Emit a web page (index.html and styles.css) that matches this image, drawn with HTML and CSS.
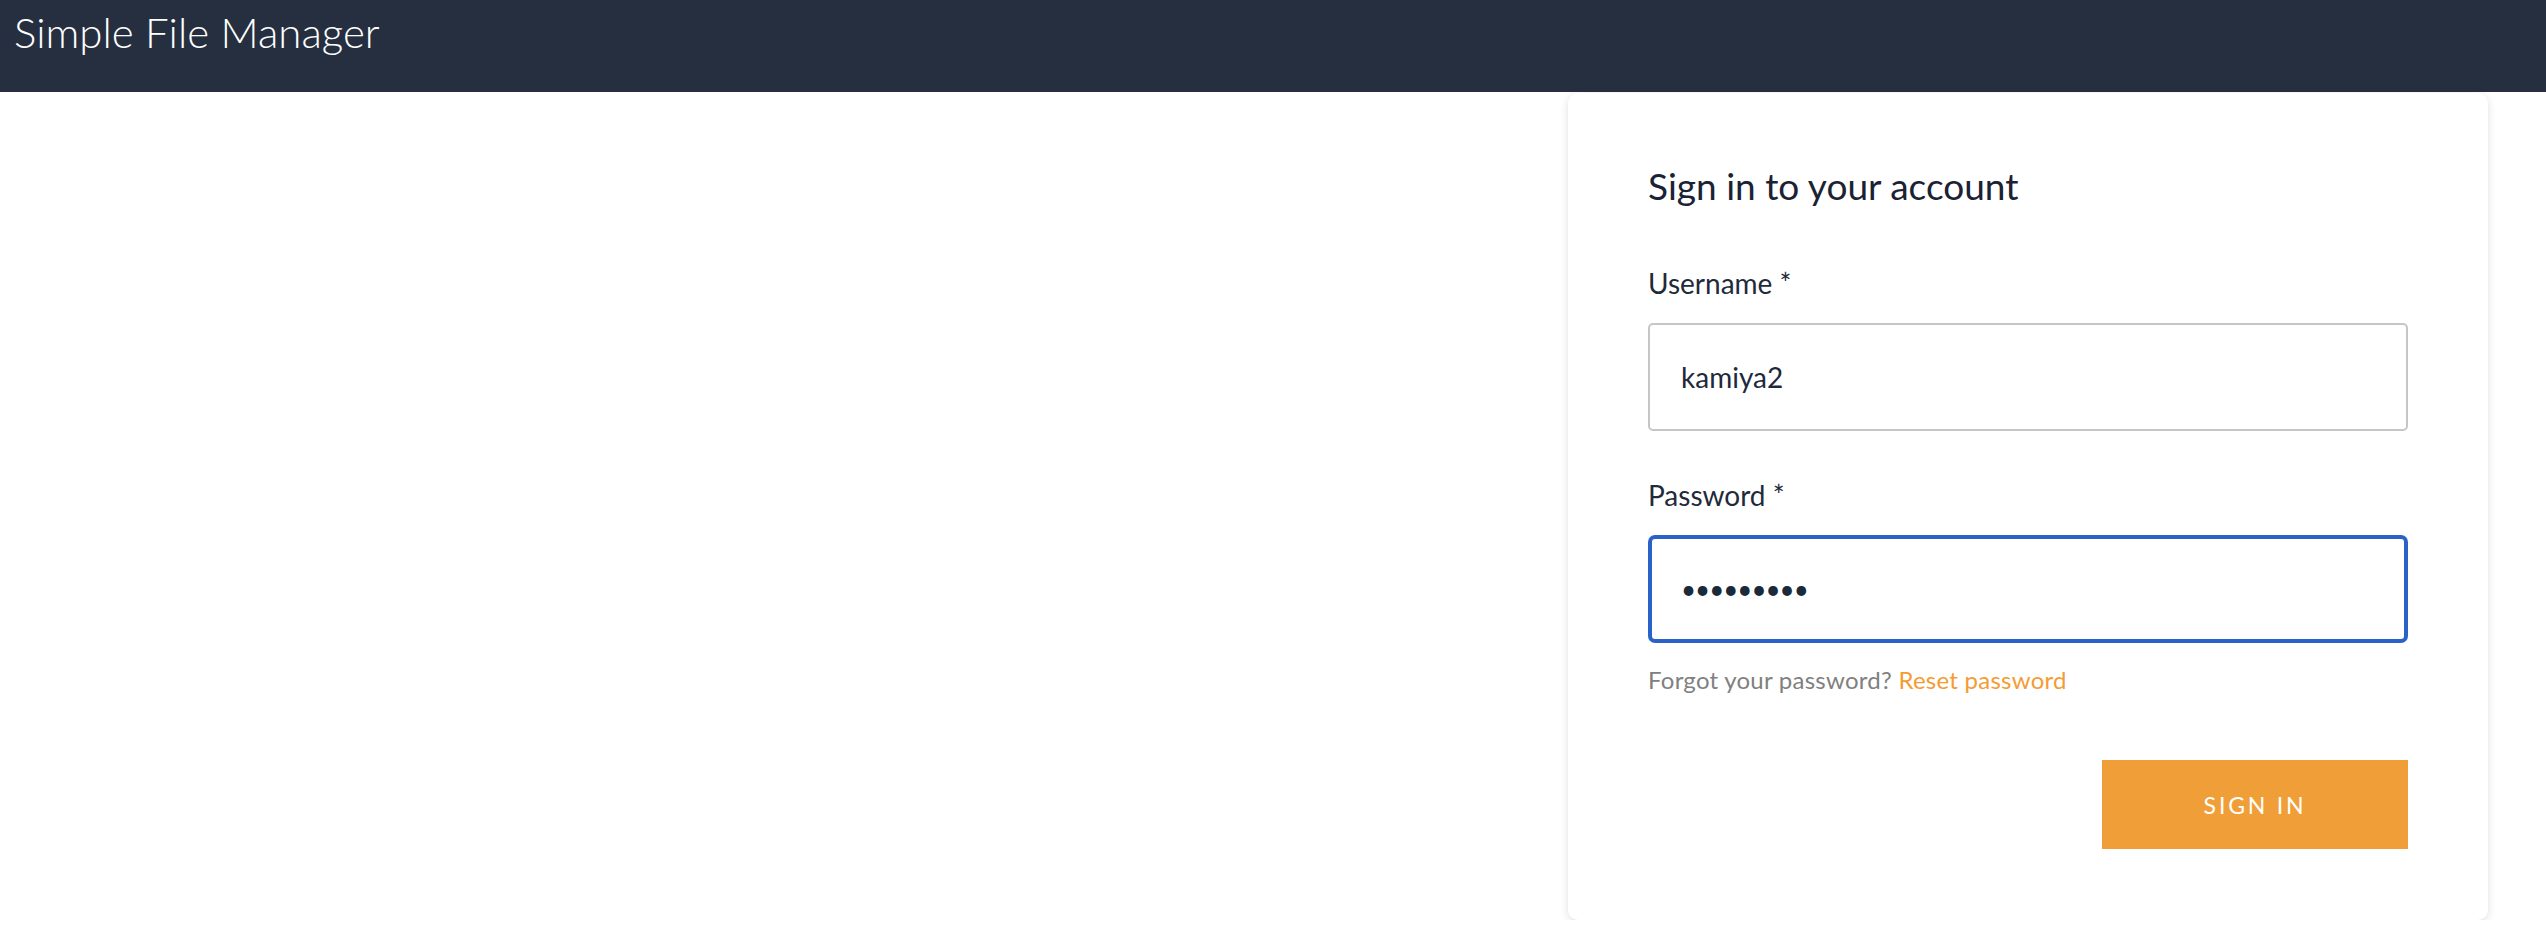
FILE: index.html
```html
<!DOCTYPE html>
<html lang="en">
<head>
<meta charset="utf-8">
<title>Simple File Manager</title>
<link rel="stylesheet" href="styles.css">
</head>
<body>
<header class="topbar">
  <div class="brand">Simple File Manager</div>
</header>
<main class="page">
  <section class="card">
    <h1 class="card-title">Sign in to your account</h1>
    <form class="form">
      <label class="label" for="user">Username *</label>
      <div class="input">kamiya2</div>
      <label class="label label-pw" for="pw">Password *</label>
      <div class="input input-focus"><span class="dots">•••••••••</span></div>
      <p class="forgot">Forgot your password? <a class="link">Reset password</a></p>
      <div class="actions">
        <button type="button" class="btn">SIGN IN</button>
      </div>
    </form>
  </section>
</main>
</body>
</html>
```

FILE: styles.css
```css
* { box-sizing: border-box; }
html, body { margin: 0; padding: 0; background: #ffffff; }
body { font-family: "Lato", "Noto Sans", sans-serif; color: #1c2536; }

.topbar {
  height: 92px;
  background: #262f3f;
  padding: 9px 0 0 14px;
}
.brand {
  color: #ffffff;
  font-size: 42px;
  font-weight: 300;
  line-height: 46px;
}

.page {
  display: flex;
  justify-content: flex-end;
  padding: 1px 58px 0 0;
}
.card {
  width: 920px;
  background: #fff;
  border-radius: 10px;
  box-shadow: 0 2px 8px rgba(0,0,0,0.13);
  padding: 72px 80px 71px;
}
.card-title {
  margin: 0 0 62px;
  font-size: 37px;
  line-height: 41px;
  font-weight: 400;
  color: #1a2233;
}
.form { display: flex; flex-direction: column; }
.label {
  font-size: 28px;
  line-height: 30px;
  color: #1f2a3a;
  margin-bottom: 25px;
}
.label-pw { margin-top: 49px; margin-bottom: 25px; }
.input {
  height: 108px;
  border: 2px solid #c6c6c6;
  border-radius: 5px;
  padding: 0 31px;
  display: flex;
  align-items: center;
  font-size: 28px;
  color: #1e293b;
}
.input-focus {
  border: 4px solid #2962c9;
  border-radius: 7px;
  padding: 0 29px;
}
.dots {
  font-size: 26px;
  letter-spacing: -1px;
  color: #1b2a3b;
}
.forgot {
  margin: 23px 0 0;
  font-size: 24px;
  letter-spacing: 0.25px;
  line-height: 28px;
  color: #808080;
}
.link { color: #f39c33; text-decoration: none; }
.actions {
  display: flex;
  justify-content: flex-end;
  margin-top: 66px;
}
.btn {
  width: 306px;
  height: 89px;
  border: none;
  border-radius: 0;
  background: #f09f38;
  color: #ffffff;
  font-family: "Lato", sans-serif;
  font-size: 23px;
  letter-spacing: 2.8px;
  font-weight: 400;
}
```
